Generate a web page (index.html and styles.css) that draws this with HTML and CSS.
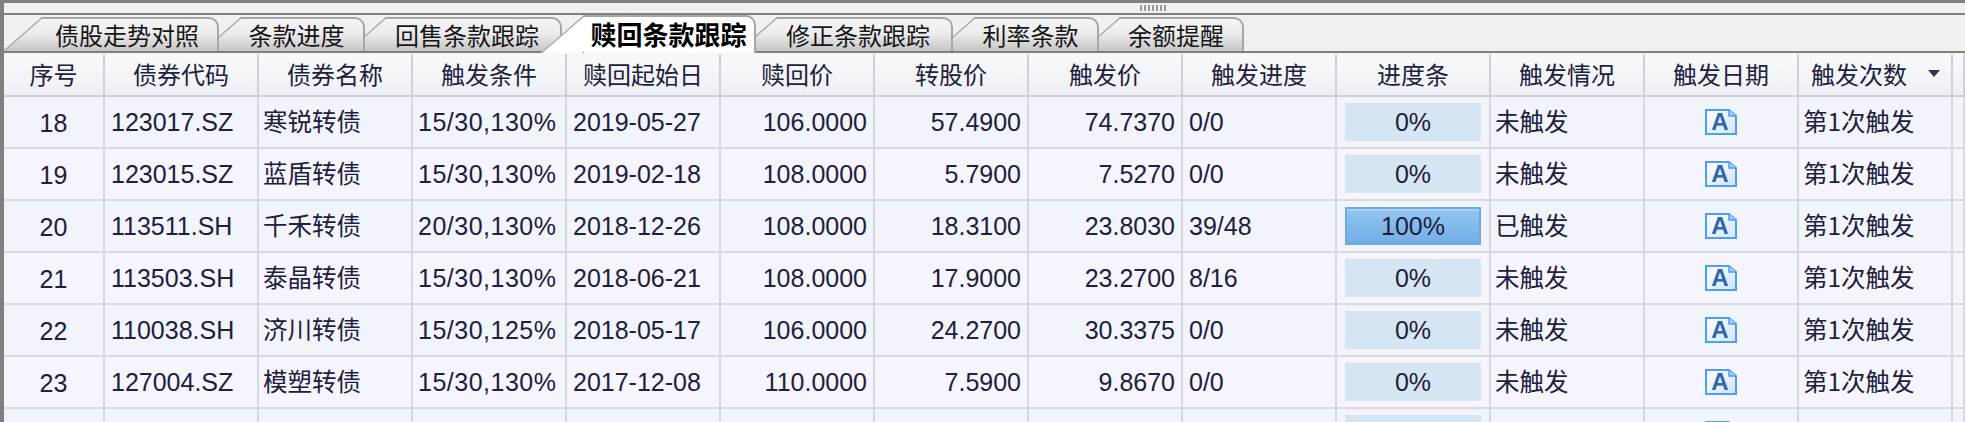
FILE: index.html
```html
<!DOCTYPE html>
<html lang="zh-CN">
<head>
<meta charset="UTF-8">
<title>赎回条款跟踪</title>
<link rel="stylesheet" href="styles.css">
</head>
<body>
  <svg class="icon-defs" width="0" height="0">
    <defs>
      <linearGradient id="docfill" x1="0" y1="0" x2="1" y2="1">
        <stop offset="0" stop-color="#ffffff"/>
        <stop offset="1" stop-color="#cfe4fb"/>
      </linearGradient>
    </defs>
    <symbol id="doc" viewBox="0 0 32 26">
      <path d="M1 1H24L31 7V25H1Z" fill="url(#docfill)" stroke="#4d9ff5" stroke-width="2"/>
      <path d="M24 1V7H31" fill="#a9d0fa" stroke="#4d9ff5" stroke-width="1.5"/>
    </symbol>
  </svg>

  <div class="top-line"></div>
  <div class="splitter"><span class="grip"></span></div>

  <nav class="tabs">
    <a class="tab tab-first">债股走势对照</a>
    <a class="tab tab-short">条款进度</a>
    <a class="tab">回售条款跟踪</a>
    <a class="tab tab-active">赎回条款跟踪</a>
    <a class="tab">修正条款跟踪</a>
    <a class="tab tab-short">利率条款</a>
    <a class="tab tab-short">余额提醒</a>
  </nav>

  <main class="grid-wrap">
    <table class="grid">
      <colgroup>
        <col class="col-no">
        <col class="col-std" span="12">
        <col class="col-end">
      </colgroup>
      <thead>
        <tr>
          <th>序号</th>
          <th>债券代码</th>
          <th>债券名称</th>
          <th>触发条件</th>
          <th>赎回起始日</th>
          <th>赎回价</th>
          <th>转股价</th>
          <th>触发价</th>
          <th>触发进度</th>
          <th>进度条</th>
          <th>触发情况</th>
          <th>触发日期</th>
          <th><div class="sort-head">触发次数<span class="sort-arrow"></span></div></th>
          <th></th>
        </tr>
      </thead>
      <tbody>
        <tr>
          <td class="num center">18</td><td class="num">123017.SZ</td><td class="zh">寒锐转债</td><td class="num tight">15/30,130%</td><td class="num">2019-05-27</td>
          <td class="num right">106.0000</td><td class="num right">57.4900</td><td class="num right">74.7370</td><td class="num">0/0</td>
          <td class="bar-cell"><div class="bar">0%</div></td><td class="zh">未触发</td>
          <td class="icon-cell"><svg class="doc-icon" viewBox="0 0 32 26"><use href="#doc"/><text x="15" y="21" text-anchor="middle" class="doc-letter">A</text></svg></td><td class="zh">第1次触发</td><td></td>
        </tr>
        <tr>
          <td class="num center">19</td><td class="num">123015.SZ</td><td class="zh">蓝盾转债</td><td class="num tight">15/30,130%</td><td class="num">2019-02-18</td>
          <td class="num right">108.0000</td><td class="num right">5.7900</td><td class="num right">7.5270</td><td class="num">0/0</td>
          <td class="bar-cell"><div class="bar">0%</div></td><td class="zh">未触发</td>
          <td class="icon-cell"><svg class="doc-icon" viewBox="0 0 32 26"><use href="#doc"/><text x="15" y="21" text-anchor="middle" class="doc-letter">A</text></svg></td><td class="zh">第1次触发</td><td></td>
        </tr>
        <tr>
          <td class="num center">20</td><td class="num">113511.SH</td><td class="zh">千禾转债</td><td class="num tight">20/30,130%</td><td class="num">2018-12-26</td>
          <td class="num right">108.0000</td><td class="num right">18.3100</td><td class="num right">23.8030</td><td class="num">39/48</td>
          <td class="bar-cell"><div class="bar bar-full">100%</div></td><td class="zh">已触发</td>
          <td class="icon-cell"><svg class="doc-icon" viewBox="0 0 32 26"><use href="#doc"/><text x="15" y="21" text-anchor="middle" class="doc-letter">A</text></svg></td><td class="zh">第1次触发</td><td></td>
        </tr>
        <tr>
          <td class="num center">21</td><td class="num">113503.SH</td><td class="zh">泰晶转债</td><td class="num tight">15/30,130%</td><td class="num">2018-06-21</td>
          <td class="num right">108.0000</td><td class="num right">17.9000</td><td class="num right">23.2700</td><td class="num">8/16</td>
          <td class="bar-cell"><div class="bar">0%</div></td><td class="zh">未触发</td>
          <td class="icon-cell"><svg class="doc-icon" viewBox="0 0 32 26"><use href="#doc"/><text x="15" y="21" text-anchor="middle" class="doc-letter">A</text></svg></td><td class="zh">第1次触发</td><td></td>
        </tr>
        <tr>
          <td class="num center">22</td><td class="num">110038.SH</td><td class="zh">济川转债</td><td class="num tight">15/30,125%</td><td class="num">2018-05-17</td>
          <td class="num right">106.0000</td><td class="num right">24.2700</td><td class="num right">30.3375</td><td class="num">0/0</td>
          <td class="bar-cell"><div class="bar">0%</div></td><td class="zh">未触发</td>
          <td class="icon-cell"><svg class="doc-icon" viewBox="0 0 32 26"><use href="#doc"/><text x="15" y="21" text-anchor="middle" class="doc-letter">A</text></svg></td><td class="zh">第1次触发</td><td></td>
        </tr>
        <tr>
          <td class="num center">23</td><td class="num">127004.SZ</td><td class="zh">模塑转债</td><td class="num tight">15/30,130%</td><td class="num">2017-12-08</td>
          <td class="num right">110.0000</td><td class="num right">7.5900</td><td class="num right">9.8670</td><td class="num">0/0</td>
          <td class="bar-cell"><div class="bar">0%</div></td><td class="zh">未触发</td>
          <td class="icon-cell"><svg class="doc-icon" viewBox="0 0 32 26"><use href="#doc"/><text x="15" y="21" text-anchor="middle" class="doc-letter">A</text></svg></td><td class="zh">第1次触发</td><td></td>
        </tr>
        <tr>
          <td></td><td></td><td></td><td></td><td></td><td></td><td></td><td></td><td></td>
          <td class="bar-cell"><div class="bar"></div></td><td></td>
          <td class="icon-cell"><svg class="doc-icon" viewBox="0 0 32 26"><use href="#doc"/></svg></td><td></td><td></td>
        </tr>
      </tbody>
    </table>
  </main>
</body>
</html>
```

FILE: styles.css
```css
html, body {
  margin: 0;
  padding: 0;
  height: 422px;
  overflow: hidden;
}

body {
  background-color: #f0f0f0;
  color: #20203a;
  font-family: "Liberation Sans", "Noto Sans CJK SC", sans-serif;
}

.icon-defs {
  display: block;
  height: 0;
}

.doc-letter {
  font-family: "Liberation Sans", sans-serif;
  font-size: 24px;
  font-weight: bold;
  fill: #2f66a8;
}

.top-line {
  height: 3px;
  background-color: #808080;
}

.splitter {
  height: 10px;
  display: flex;
  justify-content: center;
  align-items: center;
  padding-left: 338px;
  background-color: #f0f0f0;
  border-bottom: 2px solid #808080;
  border-left: 4px solid #808080;
}

.grip {
  width: 27px;
  height: 6px;
  background: repeating-linear-gradient(to right, #9a9a9a 0, #9a9a9a 2px, transparent 2px, transparent 4px);
}

/* tabs */
.tabs {
  height: 36px;
  display: flex;
  align-items: flex-end;
  gap: 21.5px;
  padding-left: 38px;
  border-bottom: 2px solid #808080;
  border-left: 4px solid #808080;
}

.tab {
  position: relative;
  height: 30px;
  display: flex;
  align-items: center;
  padding: 0 21px 2px 9px;
  font-family: "Noto Sans CJK SC", sans-serif;
  font-size: 24px;
  color: #151515;
  background: linear-gradient(#f5f5f5, #ececec 45%, #c6c6c6);
  border-top: 2px solid #a6a6a6;
  border-right: 2px solid #a6a6a6;
  border-top-right-radius: 10px;
  z-index: 3;
}

.tab::before {
  content: "";
  position: absolute;
  top: -2px;
  bottom: 0;
  left: 0;
  width: 40px;
  background: linear-gradient(#f5f5f5, #ececec 45%, #c6c6c6);
  border-top: 2px solid #a6a6a6;
  border-left: 2px solid #a6a6a6;
  transform: skewX(-49deg);
  transform-origin: top left;
  z-index: -1;
}

.tab-first {
  padding-left: 13px;
  padding-right: 18px;
  z-index: 7;
}

.tab-short {
  padding-left: 8px;
  padding-right: 18px;
}

.tab:nth-child(2) {
  z-index: 6;
}

.tab:nth-child(3) {
  z-index: 5;
}

.tab:nth-child(5) {
  z-index: 4;
}

.tab:nth-child(6) {
  z-index: 2;
}

.tab:nth-child(7) {
  z-index: 1;
}

.tab-active {
  height: 32px;
  margin-bottom: -2px;
  padding: 0 7px 4px 7px;
  font-size: 26px;
  font-weight: bold;
  color: #000;
  background: #fff;
  z-index: 8;
}

.tab-active::before {
  background: #fff;
}

/* grid */
.grid-wrap {
  border-left: 4px solid #808080;
  padding-top: 1px;
  background-color: #f1f4fa;
}

.grid {
  table-layout: fixed;
  width: 1961px;
  border-collapse: separate;
  border-spacing: 0;
}

.col-no {
  width: 101px;
}

.col-std {
  width: 154px;
}

.col-end {
  width: 12px;
}

.grid th {
  height: 43px;
  box-sizing: border-box;
  padding: 0 0 2px;
  font-family: "Noto Sans CJK SC", sans-serif;
  font-size: 24px;
  font-weight: 400;
  text-align: center;
  background: linear-gradient(#f8f9fb, #eef0f5);
  border-right: 2px solid #d0d1d8;
  border-bottom: 2px solid #cfd0d6;
}

.grid td {
  height: 52px;
  box-sizing: border-box;
  padding: 0 5px;
  white-space: nowrap;
  overflow: hidden;
  border-right: 2px solid #d8d9de;
  border-bottom: 2px solid #d8d9de;
}

.grid tbody tr:nth-child(odd) td {
  background-color: #f1f4fa;
}

.grid tbody tr:nth-child(even) td {
  background-color: #f6f4fd;
}

.grid .num {
  padding: 0 6px 0 6px;
  font-size: 25px;
}

.grid .center {
  padding-top: 2px;
  text-align: center;
}

.grid .right {
  text-align: right;
}

.grid .tight {
  padding: 0 3px 0 5px;
  letter-spacing: 0.5px;
}

.grid .zh {
  padding: 0 5px 3px 4px;
  font-family: "Noto Sans CJK SC", sans-serif;
  font-size: 24.5px;
}

.sort-head {
  display: flex;
  align-items: center;
  padding-left: 12px;
}

.sort-arrow {
  width: 0;
  height: 0;
  margin-left: 21px;
  border-left: 6px solid transparent;
  border-right: 6px solid transparent;
  border-top: 7px solid #33334d;
}

.grid .bar-cell {
  padding: 0 6px 0 8px;
}

.bar {
  height: 38px;
  width: 136px;
  box-sizing: border-box;
  display: flex;
  align-items: center;
  justify-content: center;
  font-size: 25px;
  background-color: #d5e5f2;
}

.bar-full {
  background: linear-gradient(#93c6f3, #72aee6);
  border: 2px solid #70a9e0;
  box-shadow: inset 0 2px 0 #a9d2f5;
}

.grid .icon-cell {
  padding: 0;
  text-align: center;
}

.doc-icon {
  display: block;
  width: 32px;
  height: 26px;
  margin: 0 auto;
}
```
